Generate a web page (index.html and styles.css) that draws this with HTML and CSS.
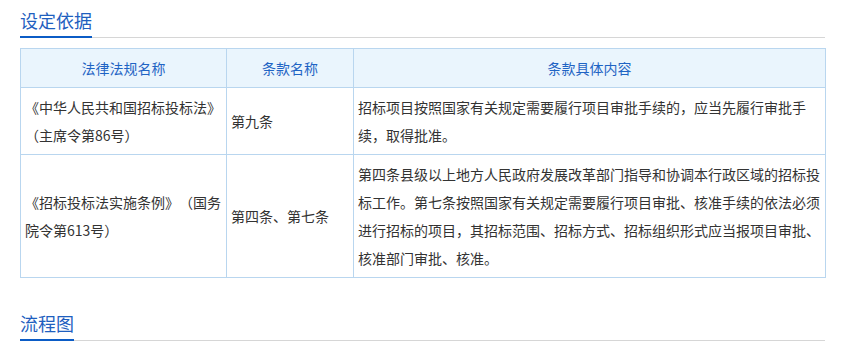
FILE: index.html
```html
<!DOCTYPE html>
<html lang="zh-CN">
<head>
<meta charset="utf-8">
<title>设定依据</title>
<link rel="stylesheet" href="styles.css">
</head>
<body>
<div class="page">
  <div class="section-title"><span class="title-text">设定依据</span></div>
  <table class="basis">
    <colgroup>
      <col class="c1">
      <col class="c2">
      <col class="c3">
    </colgroup>
    <thead>
      <tr>
        <th>法律法规名称</th>
        <th>条款名称</th>
        <th>条款具体内容</th>
      </tr>
    </thead>
    <tbody>
      <tr>
        <td>《中华人民共和国招标投标法》（主席令第86号）</td>
        <td>第九条</td>
        <td>招标项目按照国家有关规定需要履行项目审批手续的，应当先履行审批手续，取得批准。</td>
      </tr>
      <tr>
        <td>《招标投标法实施条例》（国务院令第613号）</td>
        <td>第四条、第七条</td>
        <td>第四条县级以上地方人民政府发展改革部门指导和协调本行政区域的招标投标工作。第七条按照国家有关规定需要履行项目审批、核准手续的依法必须进行招标的项目，其招标范围、招标方式、招标组织形式应当报项目审批、核准部门审批、核准。</td>
      </tr>
    </tbody>
  </table>
  <div class="section-title second"><span class="title-text">流程图</span></div>
</div>
</body>
</html>
```

FILE: styles.css
```css
html, body {
  margin: 0;
  padding: 0;
  background: #ffffff;
}

body {
  font-family: "Noto Sans CJK SC", "Noto Sans", "Liberation Sans", sans-serif;
  color: #333333;
  font-size: 14px;
  text-spacing-trim: space-all;
}

.page {
  width: 805px;
  padding: 8px 18px 0 20px;
}

.section-title {
  border-bottom: 1px solid #d6d6d6;
  height: 29px;
}

.section-title.second {
  margin-top: 33px;
}

.title-text {
  display: inline-block;
  font-size: 18px;
  line-height: 24px;
  color: #1f5fbf;
  padding-bottom: 4px;
  border-bottom: 2px solid #0b5cc6;
}

.basis {
  margin-top: 10px;
  width: 805px;
  table-layout: fixed;
  border-collapse: collapse;
}

.basis col.c1 { width: 206px; }
.basis col.c2 { width: 127px; }
.basis col.c3 { width: 472px; }

.basis th,
.basis td {
  border: 1px solid #b9d6ef;
  padding: 5px 4px;
  line-height: 28px;
  font-size: 14px;
  vertical-align: middle;
  text-align: left;
}

.basis th {
  background: #eaf5fd;
  color: #1f64c4;
  font-weight: normal;
  text-align: center;
}

.basis td {
  color: #333333;
}
```
